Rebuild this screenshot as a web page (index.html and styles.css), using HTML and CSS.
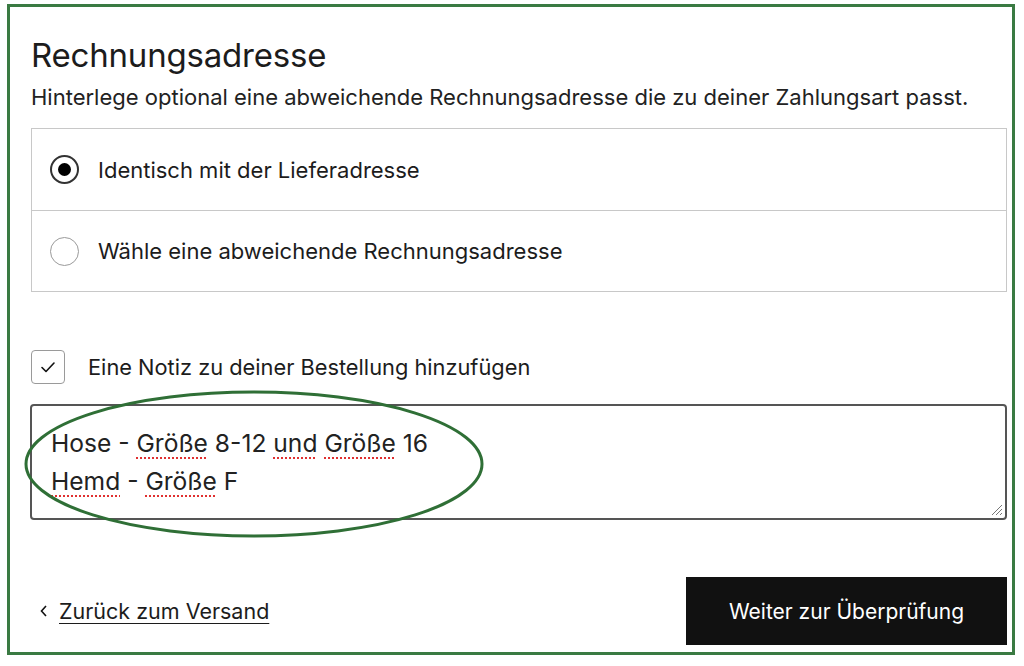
FILE: index.html
```html
<!DOCTYPE html>
<html lang="de">
<head>
<meta charset="utf-8">
<link rel="stylesheet" href="styles.css">
</head>
<body>
<div class="frame">
  <h1 class="title">Rechnungsadresse</h1>
  <p class="subtitle">Hinterlege optional eine abweichende Rechnungsadresse die zu deiner Zahlungsart passt.</p>
  <div class="options">
    <div class="option">
      <span class="radio checked"><span class="dot"></span></span>
      <span class="opt-label">Identisch mit der Lieferadresse</span>
    </div>
    <div class="option">
      <span class="radio"></span>
      <span class="opt-label">Wähle eine abweichende Rechnungsadresse</span>
    </div>
  </div>
  <div class="note-row">
    <span class="checkbox">
      <svg width="20" height="20" viewBox="0 0 20 20"><path d="M4 10.5 L8 14.5 L16 6" fill="none" stroke="#111" stroke-width="1.6" stroke-linecap="round" stroke-linejoin="round"/></svg>
    </span>
    <span class="note-label">Eine Notiz zu deiner Bestellung hinzufügen</span>
  </div>
  <div class="textarea">
    <div class="line">Hose - <span class="sp">Größe</span> 8-12 <span class="sp">und</span> <span class="sp">Größe</span> 16</div>
    <div class="line"><span class="sp">Hemd</span> - <span class="sp">Größe</span> F</div>
    <svg class="grip" width="14" height="14" viewBox="0 0 14 14"><path d="M13 3 L3 13 M13 7 L7 13 M13 11 L11 13" stroke="#777" stroke-width="1"/></svg>
  </div>
  <div class="footer">
    <a class="back" href="#"><svg class="chev" width="10" height="14" viewBox="0 0 10 14"><path d="M7 2 L2.5 7 L7 12" fill="none" stroke="#111" stroke-width="1.6"/></svg><span class="back-text">Zurück zum Versand</span></a>
    <button class="next">Weiter zur Überprüfung</button>
  </div>
  <svg class="circle" width="470" height="160" viewBox="0 0 470 160"><ellipse cx="235" cy="80" rx="228" ry="72" fill="none" stroke="#2f6f36" stroke-width="3"/></svg>
</div>
</body>
</html>
```
FILE: styles.css
```css
* { box-sizing: border-box; }
body {
  margin: 0;
  background: #fff;
  font-family: Inter, "Noto Sans", sans-serif;
  color: #1c1c1c;
}
.frame {
  position: relative;
  margin: 4px 9px 0 7px;
  height: 651px;
  border: 3px solid #3a7a42;
  padding: 28px 5px 0 21px;
}
.title {
  margin: 0;
  font-size: 33px;
  font-weight: 400;
  line-height: 40px;
  letter-spacing: -0.2px;
}
.subtitle {
  margin: 8px 0 0;
  font-size: 22px;
  line-height: 28px;
  font-weight: 400;
  color: #222;
  white-space: nowrap;
}
.options {
  margin-top: 17px;
  border: 1px solid #c8c8c8;
}
.option {
  height: 81px;
  display: flex;
  align-items: center;
  padding-left: 18px;
}
.option + .option { border-top: 1px solid #c8c8c8; }
.radio {
  width: 29px;
  height: 29px;
  border-radius: 50%;
  border: 1px solid #9a9a9a;
  display: flex;
  align-items: center;
  justify-content: center;
  flex: none;
}
.radio.checked { border: 2px solid #333; }
.dot { width: 13px; height: 13px; border-radius: 50%; background: #000; }
.opt-label {
  margin-left: 19px;
  font-size: 22px;
  color: #1c1c1c;
}
.note-row {
  margin-top: 58px;
  display: flex;
  align-items: center;
}
.checkbox {
  width: 34px;
  height: 34px;
  border: 1px solid #9a9a9a;
  border-radius: 4px;
  display: flex;
  align-items: center;
  justify-content: center;
  flex: none;
}
.note-label {
  margin-left: 23px;
  font-size: 21.8px;
}
.textarea {
  position: relative;
  margin-top: 20px;
  margin-left: -1px;
  height: 116px;
  border: 2px solid #555;
  border-radius: 4px;
  padding: 18px 19px 0;
  font-size: 24.6px;
  line-height: 38px;
  color: #222;
}
.sp {
  text-decoration: underline dotted #e03030;
  text-decoration-thickness: 2px;
  text-underline-offset: 5px;
}
.grip { position: absolute; right: 2px; bottom: 2px; }
.footer {
  margin-top: 57px;
  display: flex;
  align-items: center;
  justify-content: space-between;
}
.back {
  display: flex;
  align-items: center;
  color: #1c1c1c;
  text-decoration: none;
  font-size: 21.5px;
  padding-left: 8px;
}
.chev { margin-right: 10px; }
.back-text {
  text-decoration: underline;
  text-decoration-thickness: 1px;
  text-underline-offset: 4px;
}
.next {
  width: 321px;
  height: 68px;
  background: #111;
  color: #fff;
  border: none;
  font-family: inherit;
  font-size: 21px;
}
.circle {
  position: absolute;
  left: 9px;
  top: 377px;
}
```
